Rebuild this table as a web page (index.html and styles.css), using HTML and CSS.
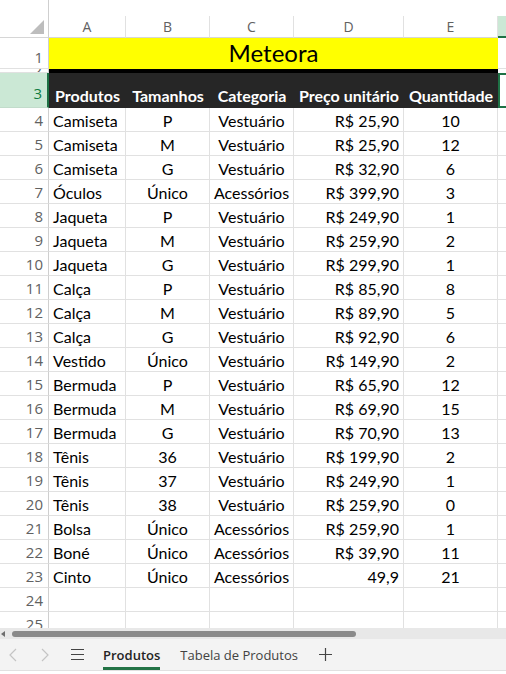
FILE: index.html
```html
<!DOCTYPE html>
<html lang="pt-BR">
<head>
<meta charset="utf-8">
<title>Meteora</title>
<link rel="stylesheet" href="styles.css">
</head>
<body>
<div class="app">
  <div class="sheet">
    <div class="corner"><svg width="14" height="14" viewBox="0 0 14 14"><polygon points="14,0 14,14 0,14" fill="#bdbdbd"/></svg></div>
    <div class="ch">A</div><div class="ch">B</div><div class="ch">C</div><div class="ch">D</div><div class="ch">E</div><div class="ch chsel"></div>

    <div class="rh">1</div><div class="title">Meteora</div><div class="c"></div>
    <div class="rh r2"><span>2</span></div><div class="band"></div><div class="c r2c"></div>
    <div class="rh rhsel">3</div>
    <div class="h">Produtos</div><div class="h">Tamanhos</div><div class="h">Categoria</div><div class="h">Preço unitário</div><div class="h">Quantidade</div><div class="c cur"></div>

    <div class="rh">4</div><div class="c l">Camiseta</div><div class="c m">P</div><div class="c m">Vestuário</div><div class="c r">R$ 25,90</div><div class="c m">10</div><div class="c"></div>
    <div class="rh">5</div><div class="c l">Camiseta</div><div class="c m">M</div><div class="c m">Vestuário</div><div class="c r">R$ 25,90</div><div class="c m">12</div><div class="c"></div>
    <div class="rh">6</div><div class="c l">Camiseta</div><div class="c m">G</div><div class="c m">Vestuário</div><div class="c r">R$ 32,90</div><div class="c m">6</div><div class="c"></div>
    <div class="rh">7</div><div class="c l">Óculos</div><div class="c m">Único</div><div class="c m">Acessórios</div><div class="c r">R$ 399,90</div><div class="c m">3</div><div class="c"></div>
    <div class="rh">8</div><div class="c l">Jaqueta</div><div class="c m">P</div><div class="c m">Vestuário</div><div class="c r">R$ 249,90</div><div class="c m">1</div><div class="c"></div>
    <div class="rh">9</div><div class="c l">Jaqueta</div><div class="c m">M</div><div class="c m">Vestuário</div><div class="c r">R$ 259,90</div><div class="c m">2</div><div class="c"></div>
    <div class="rh">10</div><div class="c l">Jaqueta</div><div class="c m">G</div><div class="c m">Vestuário</div><div class="c r">R$ 299,90</div><div class="c m">1</div><div class="c"></div>
    <div class="rh">11</div><div class="c l">Calça</div><div class="c m">P</div><div class="c m">Vestuário</div><div class="c r">R$ 85,90</div><div class="c m">8</div><div class="c"></div>
    <div class="rh">12</div><div class="c l">Calça</div><div class="c m">M</div><div class="c m">Vestuário</div><div class="c r">R$ 89,90</div><div class="c m">5</div><div class="c"></div>
    <div class="rh">13</div><div class="c l">Calça</div><div class="c m">G</div><div class="c m">Vestuário</div><div class="c r">R$ 92,90</div><div class="c m">6</div><div class="c"></div>
    <div class="rh">14</div><div class="c l">Vestido</div><div class="c m">Único</div><div class="c m">Vestuário</div><div class="c r">R$ 149,90</div><div class="c m">2</div><div class="c"></div>
    <div class="rh">15</div><div class="c l">Bermuda</div><div class="c m">P</div><div class="c m">Vestuário</div><div class="c r">R$ 65,90</div><div class="c m">12</div><div class="c"></div>
    <div class="rh">16</div><div class="c l">Bermuda</div><div class="c m">M</div><div class="c m">Vestuário</div><div class="c r">R$ 69,90</div><div class="c m">15</div><div class="c"></div>
    <div class="rh">17</div><div class="c l">Bermuda</div><div class="c m">G</div><div class="c m">Vestuário</div><div class="c r">R$ 70,90</div><div class="c m">13</div><div class="c"></div>
    <div class="rh">18</div><div class="c l">Tênis</div><div class="c m">36</div><div class="c m">Vestuário</div><div class="c r">R$ 199,90</div><div class="c m">2</div><div class="c"></div>
    <div class="rh">19</div><div class="c l">Tênis</div><div class="c m">37</div><div class="c m">Vestuário</div><div class="c r">R$ 249,90</div><div class="c m">1</div><div class="c"></div>
    <div class="rh">20</div><div class="c l">Tênis</div><div class="c m">38</div><div class="c m">Vestuário</div><div class="c r">R$ 259,90</div><div class="c m">0</div><div class="c"></div>
    <div class="rh">21</div><div class="c l">Bolsa</div><div class="c m">Único</div><div class="c m">Acessórios</div><div class="c r">R$ 259,90</div><div class="c m">1</div><div class="c"></div>
    <div class="rh">22</div><div class="c l">Boné</div><div class="c m">Único</div><div class="c m">Acessórios</div><div class="c r">R$ 39,90</div><div class="c m">11</div><div class="c"></div>
    <div class="rh">23</div><div class="c l">Cinto</div><div class="c m">Único</div><div class="c m">Acessórios</div><div class="c r">49,9</div><div class="c m">21</div><div class="c"></div>
    <div class="rh">24</div><div class="c"></div><div class="c"></div><div class="c"></div><div class="c"></div><div class="c"></div><div class="c"></div>
    <div class="rh">25</div><div class="c"></div><div class="c"></div><div class="c"></div><div class="c"></div><div class="c"></div><div class="c"></div>
  </div>

  <div class="hscroll"><span class="arrow"></span><span class="thumb"></span></div>

  <div class="tabs">
    <svg class="prev" width="8" height="14" viewBox="0 0 8 14"><polyline points="7,1 1,7 7,13" fill="none" stroke="#c4c4c4" stroke-width="1.2"/></svg>
    <svg class="next" width="8" height="14" viewBox="0 0 8 14"><polyline points="1,1 7,7 1,13" fill="none" stroke="#c4c4c4" stroke-width="1.2"/></svg>
    <svg class="menu" width="13" height="11" viewBox="0 0 13 11"><path d="M0 0.5H13M0 5.5H13M0 10.5H13" stroke="#444" stroke-width="1.2"/></svg>
    <div class="tab active">Produtos</div>
    <div class="tab">Tabela de Produtos</div>
    <svg class="plus" width="13" height="13" viewBox="0 0 13 13"><path d="M6.5 0V13M0 6.5H13" stroke="#444" stroke-width="1.2"/></svg>
  </div>
</div>
</body>
</html>
```

FILE: styles.css
```css
html, body {
  margin: 0;
  padding: 0;
  background: #ffffff;
}

.app {
  width: 506px;
  height: 674px;
  overflow: hidden;
  display: flex;
  flex-direction: column;
}

.sheet {
  display: grid;
  grid-template-columns: 49px 77px 84px 84px 110px 94px 1fr;
  grid-template-rows: 38px 31px 4px 35px repeat(22, 24px);
  height: 628px;
  flex: none;
  overflow: hidden;
  font-family: Lato, "Liberation Sans", sans-serif;
  font-size: 16px;
  color: #000;
}

.corner {
  border-right: 1px solid #cfcfcf;
  border-bottom: 1px solid #d6d6d6;
  box-sizing: border-box;
  display: flex;
  justify-content: flex-end;
  align-items: flex-end;
  padding: 0 4px 3px 0;
}

.ch {
  align-self: end;
  height: 22px;
  box-sizing: border-box;
  border-right: 1px solid #e1e1e1;
  border-bottom: 1px solid #d6d6d6;
  display: flex;
  justify-content: center;
  align-items: center;
  font-family: "Open Sans", "Noto Sans", sans-serif;
  font-size: 14px;
  color: #616161;
  line-height: 20px;
}

.chsel {
  background: #cbe8d5;
  border-bottom: 2px solid #1e7145;
  border-right: none;
}

.rh {
  box-sizing: border-box;
  border-right: 1px solid #cfcfcf;
  border-bottom: 1px solid #e1e1e1;
  display: flex;
  justify-content: flex-end;
  align-items: flex-end;
  padding: 0 5px 1px 0;
  font-family: "Open Sans", "Noto Sans", sans-serif;
  font-size: 15px;
  line-height: 20px;
  color: #616161;
  overflow: hidden;
}

.r2 {
  padding: 0;
  align-items: flex-start;
  justify-content: flex-end;
}

.r2 span {
  margin-right: 6px;
  font-size: 15px;
  line-height: 3px;
}

.rhsel {
  background: #cbe8d5;
  color: #107c41;
  border-right: 2px solid #1e7145;
  border-bottom: 1px solid #c2dccb;
  padding-bottom: 4px;
  padding-right: 5px;
}

.c {
  box-sizing: border-box;
  border-right: 1px solid #e1e1e1;
  border-bottom: 1px solid #e1e1e1;
  display: flex;
  align-items: flex-end;
  padding: 0 4px;
  line-height: 20px;
  white-space: nowrap;
  overflow: hidden;
}

.l { justify-content: flex-start; }
.m { justify-content: center; }
.r { justify-content: flex-end; }

.title {
  grid-column: span 5;
  background: #ffff00;
  display: flex;
  justify-content: center;
  align-items: flex-end;
  padding-bottom: 2px;
  font-size: 24px;
  line-height: 28px;
  color: #000;
}

.band {
  grid-column: span 5;
  background: #000000;
}

.r2c {
  border-bottom: none;
}

.h {
  background: #262626;
  color: #ffffff;
  font-weight: 700;
  display: flex;
  justify-content: center;
  align-items: flex-end;
  padding-bottom: 2px;
  line-height: 20px;
  white-space: nowrap;
}

.cur {
  border: none;
  box-shadow: inset 2px 0 0 #1e7145, inset 0 2px 0 #1e7145, inset 0 -2px 0 #1e7145;
}

.hscroll {
  height: 11px;
  flex: none;
  background: #e8e8e8;
  display: flex;
  align-items: center;
}

.arrow {
  width: 0;
  height: 0;
  margin-left: 1px;
  border-top: 3px solid transparent;
  border-bottom: 3px solid transparent;
  border-right: 4px solid #6e6e6e;
}

.thumb {
  margin-left: 7px;
  width: 344px;
  height: 6px;
  border-radius: 3px;
  background: #8a8a8a;
}

.tabs {
  height: 32px;
  flex: none;
  box-sizing: border-box;
  background: #f3f3f3;
  border-bottom: 1px solid #e1e1e1;
  display: flex;
  align-items: center;
  font-family: "Open Sans", "Noto Sans", sans-serif;
  font-size: 13px;
  color: #424242;
}

.prev { margin-left: 9px; }
.next { margin-left: 24px; }
.menu { margin-left: 22px; }

.tab {
  margin-left: 20px;
  white-space: nowrap;
}

.tab.active {
  margin-left: 19px;
  align-self: stretch;
  box-sizing: border-box;
  display: flex;
  align-items: center;
  padding-top: 3px;
  border-bottom: 3px solid #237346;
  font-weight: 600;
  color: #242424;
}

.plus { margin-left: 21px; }
```
